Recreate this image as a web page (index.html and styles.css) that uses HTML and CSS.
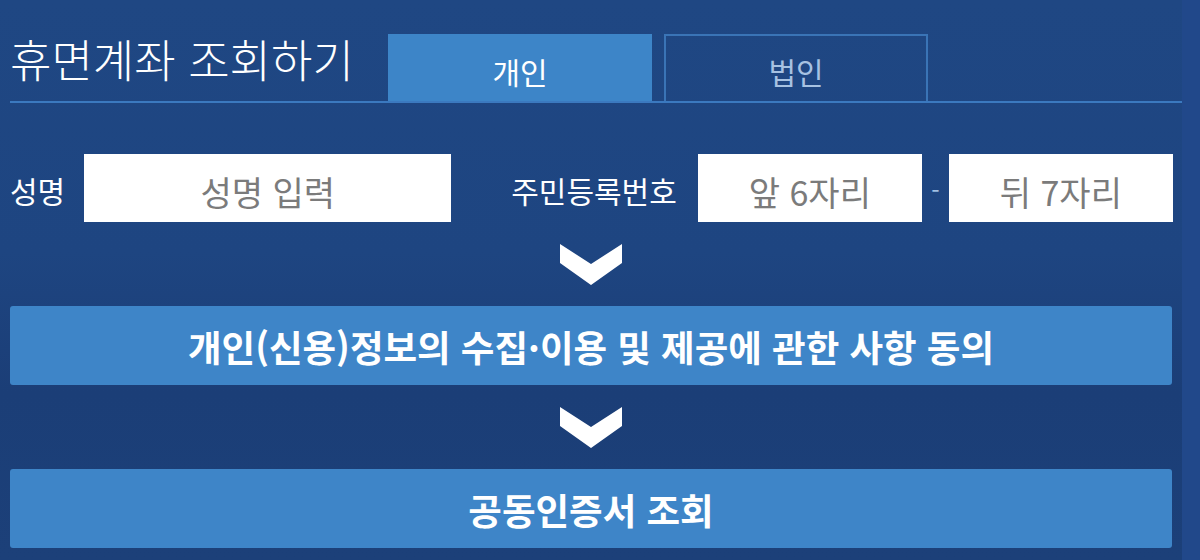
FILE: index.html
```html
<!DOCTYPE html>
<html lang="ko">
<head>
  <meta charset="UTF-8">
  <meta name="viewport" content="width=device-width, initial-scale=1.0">
  <title>휴면계좌 조회하기</title>
  <link rel="stylesheet" href="styles.css">
</head>
<body>
  <div class="panel">
    <div class="head">
      <h2 class="title">휴면계좌 조회하기</h2>
      <div class="tabs">
        <button class="tab active">개인</button>
        <button class="tab">법인</button>
      </div>
    </div>

    <div class="form-row">
      <label class="label" for="name">성명</label>
      <input class="field name" id="name" type="text" placeholder="성명 입력">
      <label class="label jumin" for="front">주민등록번호</label>
      <input class="field half" id="front" type="text" placeholder="앞 6자리">
      <span class="dash">-</span>
      <input class="field half" id="back" type="password" placeholder="뒤 7자리">
    </div>

    <div class="step">
      <svg width="62" height="41" viewBox="0 0 62 41"><polygon points="0,0 31,20 62,0 62,19 31,41 0,19" fill="#fff"/></svg>
    </div>
    <button class="action">개인(신용)정보의 수집·이용 및 제공에 관한 사항 동의</button>
    <div class="step">
      <svg width="62" height="41" viewBox="0 0 62 41"><polygon points="0,0 31,20 62,0 62,19 31,41 0,19" fill="#fff"/></svg>
    </div>
    <button class="action">공동인증서 조회</button>
  </div>
</body>
</html>
```

FILE: styles.css
```css
body {
  margin: 0;
  background: #1e4682;
  font-family: "Noto Sans CJK KR", "Noto Sans", sans-serif;
  color: #fff;
}
.panel {
  height: 560px;
  box-sizing: border-box;
  padding: 0 0 0 10px;
  background: linear-gradient(180deg, #1f4783 0%, #1e4581 45%, #1b3e77 70%, #1c4079 100%);
  border-right: 18px solid #21488a;
}
.head {
  display: flex;
  align-items: flex-start;
  padding-top: 34px;
  border-bottom: 2px solid #3b79bf;
}
.title {
  margin: -5px 0 0 0;
  width: 378px;
  font-size: 45px;
  font-weight: 300;
  line-height: 60px;
  white-space: nowrap;
}
.tabs {
  display: flex;
  gap: 12px;
}
.tab {
  width: 264px;
  height: 67px;
  box-sizing: border-box;
  font-family: inherit;
  font-size: 30px;
  background: transparent;
  color: #a7c2e2;
  border: 2px solid #3a74b6;
  border-bottom: none;
  padding: 4px 0 0 0;
}
.tab.active {
  background: #3d85c8;
  color: #fff;
  border-color: #3d85c8;
}
.form-row {
  display: flex;
  align-items: center;
  margin-top: 51px;
  height: 68px;
}
.label {
  font-size: 30px;
  padding-top: 4px;
}
.field {
  height: 68px;
  box-sizing: border-box;
  border: none;
  background: #fff;
  font-family: inherit;
  font-size: 34px;
  text-align: center;
  color: #555;
  padding: 6px 0 0 0;
  outline: none;
}
.field::placeholder {
  color: #7b7b7b;
}
.name {
  width: 367px;
  margin-left: 19px;
}
.jumin {
  margin-left: 60px;
  margin-right: 21px;
}
.half {
  width: 224px;
}
.dash {
  width: 27px;
  text-align: center;
  font-size: 24px;
  color: #a3c0e3;
  margin-top: 2px;
}
.step {
  display: flex;
  justify-content: center;
  width: 1162px;
  margin: 22px 0 21px 0;
}
.step svg {
  display: block;
}
.action {
  display: block;
  width: 1162px;
  height: 79px;
  border: none;
  border-radius: 3px;
  background: #3e85c8;
  color: #fff;
  font-family: inherit;
  font-size: 36.5px;
  font-weight: 700;
  padding: 2px 0 0 0;
}
```
